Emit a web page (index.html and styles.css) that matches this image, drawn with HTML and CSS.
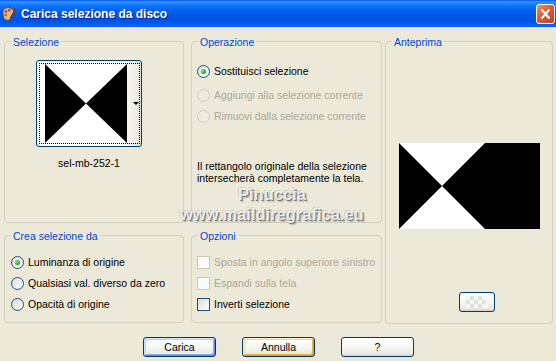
FILE: index.html
```html
<!DOCTYPE html>
<html lang="it">
<head>
  <meta charset="UTF-8">
  <title>Carica selezione da disco</title>
  <link rel="stylesheet" href="styles.css">
</head>
<body>
  <div class="titlebar">
    <svg class="appicon" width="16" height="16" viewBox="0 0 16 16">
      <path d="M2 6c0-3 3-5 7-4 3 1 5 3 4 6-1 2-3 1-3 3s-2 4-5 3C2 13 2 9 2 6z" fill="#F2B27C" stroke="#7A3E12" stroke-width="0.8"/>
      <circle cx="5" cy="5.5" r="1.2" fill="#D42020"/>
      <circle cx="8.3" cy="4.3" r="1.2" fill="#2A5BD7"/>
      <circle cx="4.6" cy="9" r="1.2" fill="#2C9A2C"/>
      <path d="M9.5 12.5 14.5 2.5" stroke="#6B3B12" stroke-width="1.6"/>
      <path d="M14 2 15.5 1" stroke="#3A7BE0" stroke-width="1.6"/>
    </svg>
    <span class="title">Carica selezione da disco</span>
    <span class="close">
      <svg width="17" height="18" viewBox="0 0 17 18"><path d="M4.5 4.5 12.5 13.5M12.5 4.5 4.5 13.5" stroke="#fff" stroke-width="2"/></svg>
    </span>
  </div>

  <div class="dialog">
    <div class="panels">
      <div class="left">
        <fieldset class="group">
          <legend>Selezione</legend>
          <div class="sel-body">
            <div class="thumb">
              <div class="focus">
                <svg width="82" height="79" viewBox="0 0 82 79">
                  <rect width="82" height="79" fill="#fff"/>
                  <polygon points="0,0 41,39.5 0,79" fill="#000"/>
                  <polygon points="82,0 41,39.5 82,79" fill="#000"/>
                </svg>
                <span class="arrow"></span>
              </div>
            </div>
            <div class="sel-name">sel-mb-252-1</div>
          </div>
        </fieldset>

        <fieldset class="group">
          <legend>Operazione</legend>
          <div class="ops">
            <div class="opt first"><span class="radio on"></span>Sostituisci selezione</div>
            <div class="opt dis"><span class="radio"></span>Aggiungi alla selezione corrente</div>
            <div class="opt dis"><span class="radio"></span>Rimuovi dalla selezione corrente</div>
            <p class="note">Il rettangolo originale della selezione intersecherà completamente la tela.</p>
          </div>
        </fieldset>

        <fieldset class="group">
          <legend>Crea selezione da</legend>
          <div class="opts crea">
            <div class="opt"><span class="radio on"></span>Luminanza di origine</div>
            <div class="opt"><span class="radio"></span>Qualsiasi val. diverso da zero</div>
            <div class="opt"><span class="radio"></span>Opacità di origine</div>
          </div>
        </fieldset>

        <fieldset class="group">
          <legend>Opzioni</legend>
          <div class="opts">
            <div class="opt dis"><span class="check"></span>Sposta in angolo superiore sinistro</div>
            <div class="opt dis"><span class="check"></span>Espandi sulla tela</div>
            <div class="opt"><span class="check"></span>Inverti selezione</div>
          </div>
        </fieldset>
      </div>

      <fieldset class="group preview">
        <legend>Anteprima</legend>
        <div class="prev-body">
          <svg width="141" height="86" viewBox="0 0 141 86">
            <rect width="141" height="86" fill="#000"/>
            <polygon points="0,0 86,0 43,43" fill="#fff"/>
            <polygon points="0,86 86,86 43,43" fill="#fff"/>
          </svg>
          <button class="btn small">
            <svg width="22" height="12" viewBox="0 0 22 12">
              <rect width="22" height="12" fill="#F6F6F3"/>
              <rect x="4" y="0" width="4" height="4" fill="#E2E2DE"/>
              <rect x="12" y="0" width="4" height="4" fill="#E2E2DE"/>
              <rect x="0" y="4" width="4" height="4" fill="#E2E2DE"/>
              <rect x="8" y="4" width="4" height="4" fill="#E2E2DE"/>
              <rect x="16" y="4" width="4" height="4" fill="#E2E2DE"/>
              <rect x="4" y="8" width="4" height="4" fill="#E2E2DE"/>
              <rect x="12" y="8" width="4" height="4" fill="#E2E2DE"/>
            </svg>
          </button>
        </div>
      </fieldset>
    </div>

    <div class="actions">
      <button class="btn default">Carica</button>
      <button class="btn hot">Annulla</button>
      <button class="btn">?</button>
    </div>
  </div>

  <div class="watermark wm1">Pinuccia</div>
  <div class="watermark wm2">www.maildiregrafica.eu</div>
</body>
</html>
```

FILE: styles.css
```css
body {
  margin: 0;
  width: 556px;
  height: 361px;
  overflow: hidden;
  background: #ECE9D8;
  font-family: "Liberation Sans", Arial, sans-serif;
  font-size: 10.5px;
  color: #000;
}
.titlebar {
  height: 27px;
  display: flex;
  align-items: center;
  padding-left: 1px;
  background: linear-gradient(to bottom, #0058EE 0%, #3A93FF 7%, #1F87FF 12%, #0A74FA 22%, #0364EF 36%, #0058E6 52%, #0054E3 72%, #0057EA 84%, #0262F6 92%, #0A6CFC 96%, #0050DC 100%);
}
.appicon {
  margin-right: 4px;
}
.title {
  color: #fff;
  font-weight: bold;
  font-size: 12px;
  text-shadow: 1px 1px 0 #0A1F8A;
  flex: 1;
}
.close {
  width: 19px;
  height: 20px;
  box-sizing: border-box;
  border: 1px solid #fff;
  border-radius: 3px;
  margin-right: 1px;
  background: linear-gradient(135deg, #F08E6C 0%, #E05A34 45%, #C8401E 100%);
  display: flex;
  align-items: center;
  justify-content: center;
}
.dialog {
  padding: 6px 3px 0 4px;
}
.panels {
  display: flex;
  gap: 3px;
}
.left {
  display: grid;
  grid-template-columns: 180px 191px;
  grid-template-rows: 190px 96px;
  column-gap: 7px;
  row-gap: 4px;
}
.group {
  margin: 0;
  padding: 0;
  min-width: 0;
  border: 1px solid #D0D0BF;
  border-radius: 4px;
}
.group legend {
  color: #0046D5;
  padding: 3px 2px 0;
  margin-left: 6px;
  line-height: 13px;
}
.preview {
  width: 168px;
  height: 291px;
  box-sizing: border-box;
}
.sel-body {
  display: flex;
  flex-direction: column;
  align-items: center;
  padding: 11px 10px 0 0;
}
.thumb {
  width: 106px;
  height: 87px;
  box-sizing: border-box;
  border: 1px solid #003C74;
  border-radius: 3px;
  padding: 2px;
  display: flex;
  background: linear-gradient(to right, #fff 80%, #F0F0EA 92%, #E4E2DA);
}
.focus {
  flex: 1;
  border: 1px dotted #000;
  display: flex;
  align-items: center;
  padding-left: 5px;
}
.arrow {
  margin-left: 6px;
  border-left: 3px solid transparent;
  border-right: 3px solid transparent;
  border-top: 3px solid #000;
}
.sel-name {
  margin-top: 10px;
  line-height: 13px;
}
.ops, .opts {
  display: flex;
  flex-direction: column;
  padding-left: 5px;
}
.ops {
  padding-top: 14px;
  gap: 5px;
}
.opts {
  padding-top: 11px;
  gap: 5px;
}
.crea {
  padding-left: 6px;
}
.opt {
  display: flex;
  align-items: center;
  gap: 4px;
  height: 16px;
  white-space: nowrap;
}
.opt.first {
  margin-bottom: 3px;
}
.opt.dis {
  color: #ACA899;
}
.radio {
  width: 13px;
  height: 13px;
  box-sizing: border-box;
  border: 1px solid #1C5180;
  border-radius: 50%;
  background: linear-gradient(135deg, #DCDCD7, #FFFFFF);
  display: flex;
  align-items: center;
  justify-content: center;
}
.radio.on::after {
  content: "";
  width: 5px;
  height: 5px;
  border-radius: 50%;
  background: radial-gradient(circle at 35% 35%, #7AE876, #21A121 70%);
}
.dis .radio {
  border-color: #CFCDC0;
  background: #EDEBDF;
}
.check {
  width: 13px;
  height: 13px;
  box-sizing: border-box;
  border: 1px solid #1C5180;
  background: linear-gradient(135deg, #DCDCD7, #FFFFFF);
}
.dis .check {
  border-color: #CAC8BB;
  background: #FAFAF7;
}
.note {
  margin: 31px 0 0;
  line-height: 12px;
  padding-right: 6px;
}
.prev-body {
  display: flex;
  flex-direction: column;
  align-items: center;
  padding-top: 94px;
}
.btn {
  width: 73px;
  height: 20px;
  box-sizing: border-box;
  padding: 0;
  border: 1px solid #003C74;
  border-radius: 3px;
  background: linear-gradient(to bottom, #FFFFFF 0%, #F6F6F3 50%, #ECEBE6 85%, #D6D0C5 100%);
  font: inherit;
  color: #000;
  display: flex;
  align-items: center;
  justify-content: center;
}
.btn.small {
  width: 36px;
  margin-top: 63px;
  margin-left: 15px;
}
.btn.default {
  box-shadow: inset 1px 1px 0 #CEE7FF, inset -1px -1px 0 #6982EE, inset 2px 2px 0 #BCD4F6, inset -2px -2px 0 #89ADE4;
}
.btn.hot {
  box-shadow: inset 1px 1px 0 #FFF0CF, inset -1px -1px 0 #E5971F, inset 2px 2px 0 #FDD889, inset -2px -2px 0 #F8B330;
}
.actions {
  display: flex;
  justify-content: center;
  gap: 26px;
  margin-top: 13px;
}
.watermark {
  position: absolute;
  font-weight: bold;
  font-size: 16.5px;
  line-height: 16.5px;
  color: rgba(245, 245, 245, 0.9);
  text-shadow: 1px 1px 0 rgba(100, 100, 100, 0.75), 2px 2px 1px rgba(140, 140, 140, 0.5), -1px -1px 0 rgba(190, 190, 190, 0.6);
  white-space: nowrap;
}
.wm1 {
  left: 238px;
  top: 186px;
}
.wm2 {
  left: 180px;
  top: 206px;
}
```
